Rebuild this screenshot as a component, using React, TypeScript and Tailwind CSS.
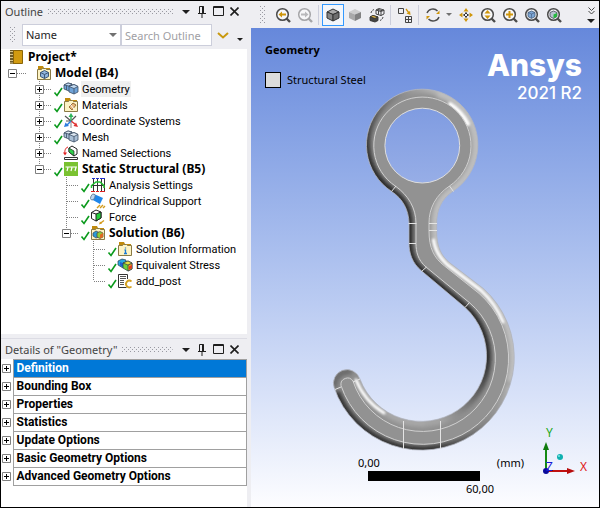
import React from "react";

const UI = "font-['Noto_Sans','Open_Sans',sans-serif]";

/* ---------- small glyphs ---------- */

function Dots({ id, className }: { id: string; className: string }) {
  return (
    <svg className={className} aria-hidden="true">
      <defs>
        <pattern id={id} width="4" height="4" patternUnits="userSpaceOnUse">
          <rect x="0" y="0" width="1" height="1" fill="#9a9aa2" />
          <rect x="2" y="2" width="1" height="1" fill="#9a9aa2" />
        </pattern>
      </defs>
      <rect width="100%" height="100%" fill={`url(#${id})`} />
    </svg>
  );
}

function Caret({ color = "#1e1e1e", size = 8 }: { color?: string; size?: number }) {
  return (
    <svg width={size} height={size / 2} viewBox="0 0 8 4" aria-hidden="true">
      <path d="M0 0h8L4 4z" fill={color} />
    </svg>
  );
}

function PanelHeader({ title, id }: { title: string; id: string }) {
  const button = "flex h-4 w-4 items-center justify-center";
  return (
    <header className="flex h-5 shrink-0 items-center bg-[#eeeef2] pt-px pr-[5px] pl-1">
      <h2 className="text-[11px] leading-5 whitespace-nowrap text-[#444]">{title}</h2>
      <Dots id={id} className="mx-[5px] h-[5px] min-w-0 flex-1" />
      <button className={button} aria-label={`${title} menu`}>
        <Caret />
      </button>
      <button className={button} aria-label={`Pin ${title}`}>
        <svg width="8" height="12" viewBox="0 0 8 12" stroke="#1e1e1e" fill="none">
          <path d="M1.500 7V.5h4V7M0 7.500h8M4 8v4" />
          <path d="M5 .5V7" strokeWidth="2" />
        </svg>
      </button>
      <button className={button} aria-label={`Maximize ${title}`}>
        <svg width="11" height="11" viewBox="0 0 11 11" stroke="#1e1e1e" fill="none">
          <path d="M.5.500h10v9H.5zM0 1.500h11" />
        </svg>
      </button>
      <button className={button} aria-label={`Close ${title}`}>
        <svg width="9" height="9" viewBox="0 0 9 9" stroke="#1e1e1e" strokeWidth="1.600" fill="none">
          <path d="M.5.500l8 8M8.500.500l-8 8" />
        </svg>
      </button>
    </header>
  );
}

/* ---------- tree icons ---------- */

function FolderBase({ children }: { children?: React.ReactNode }) {
  return (
    <>
      <path d="M2 1h5l1 2h6v4H2z" fill="#c08a0c" />
      <path d="M1.500 4.500h4l1-1h3l1 1h4V14.500h-13z" fill="#fdf3c4" stroke="#8a7a45" />
      {children}
    </>
  );
}

function BlocksIcon({ light }: { light?: boolean }) {
  const face = light ? "#a9bfd6" : "#6fa3d8";
  const top = light ? "#dbe6f0" : "#c5dcf3";
  return (
    <g stroke="#3d4f66" strokeWidth=".8" strokeLinejoin="round">
      <path d="M1 4l4-2 4 1v6l-3 1-5-2z" fill={face} />
      <path d="M1 4l4-2 4 1-3 2z" fill={top} />
      <path d="M6 5l5-1.500 4 2V11l-4 2-5-2z" fill={face} />
      <path d="M6 5.500l5-2 4 2-4 2z" fill={top} />
      <path d="M11 7.500V13M3.500 4.500V9" fill="none" />
    </g>
  );
}

const icons: Record<string, React.ReactNode> = {
  project: (
    <>
      <path d="M1 1h4v14H1z" fill="#6b5a2a" />
      <path d="M1 2.500h3M1 5.500h3M1 8.500h3M1 11.500h3M1 14h3" stroke="#d8c48c" />
      <path d="M4.500 1.500h9v13h-9z" fill="#d29b10" stroke="#8a6508" />
    </>
  ),
  model: (
    <FolderBase>
      <path d="M4.500 7.500l4-2 4 2v4l-4 2-4-2z" fill="#8fb4dd" stroke="#3f5877" />
      <path d="M4.500 7.500l4 2 4-2M8.500 9.500v4" stroke="#3f5877" fill="none" />
    </FolderBase>
  ),
  geometry: <BlocksIcon />,
  mesh: <BlocksIcon light />,
  materials: (
    <FolderBase>
      <path d="M6 10l4-4 3 2-4 5z" fill="#e6b77b" stroke="#9b6f3b" />
      <path d="M7 7l4 5" stroke="#fff" />
    </FolderBase>
  ),
  coords: (
    <g fill="none" strokeWidth="1.500">
      <path d="M8 8L2 3M8 8l5-5M8 8H3" stroke="#555" strokeWidth="1.200" />
      <path d="M8 8V3" stroke="#2fb45a" />
      <path d="M8 0l2.500 4h-5z" fill="#2fb45a" />
      <path d="M8 8l4 3" stroke="#e03030" />
      <path d="M15 14l-4.500-1 2.500-3.500z" fill="#e03030" />
      <path d="M8 8l-4 4" stroke="#2b7de0" />
      <path d="M1 14l1.500-4.500L6 13z" fill="#2b7de0" />
      <path d="M8 9v6" stroke="#888" strokeWidth="1" />
    </g>
  ),
  named: (
    <>
      <path d="M6 3l3-2 5 3v5l-3 2-5-4z" fill="#fff" stroke="#222" />
      <path d="M6 3l5 3v5l-5-4z" fill="#2fcf4a" stroke="#222" strokeWidth=".7" />
      <path d="M5 2C2 3 1.500 6 2 9" stroke="#e02020" fill="none" />
      <path d="M0 7.500h4L2 10.500z" fill="#e02020" />
      <path d="M1.500 12.500h13v2h-13z" fill="#fff" stroke="#333" />
    </>
  ),
  structural: (
    <>
      <path d="M1 1h14v14H1z" fill="#7ac231" />
      <path d="M2.500 6h11.500M5 6.500L4 10M9 6.500L8 10M13 6.500L12 10" stroke="#fff" strokeWidth="1.200" />
    </>
  ),
  analysis: (
    <>
      <path d="M3.500 2v12M7.500 2v12M11.500 2v12M14.500 2v12M2 8.500h13" stroke="#333" />
      <path d="M2 1.500h3M6 1.500h3M10 1.500h5" stroke="#2030d0" />
      <path d="M1 14.500h4M6 14.500h3M10 14.500h5" stroke="#e02020" />
      <path d="M1.500 11V8.500L6 5h4l4 3.500V11" stroke="#20c030" strokeWidth="1.500" fill="none" />
    </>
  ),
  cylinder: (
    <>
      <path d="M4 1l9 4-3 6-9-5z" fill="#1f86ea" />
      <ellipse cx="2.800" cy="4" rx="2" ry="3.200" transform="rotate(25 2.800 4)" fill="#bcd6f2" stroke="#607890" strokeWidth=".8" />
      <path d="M7 15l3-3M10 15l3-3M13 15l2-2" stroke="#d49a1a" strokeWidth="1.400" />
    </>
  ),
  force: (
    <>
      <path d="M1.500 3.500L6 1l5 2v6l-5 3-4.500-2.500z" fill="#fff" stroke="#222" />
      <path d="M6 5l5-2v6l-5 3z" fill="#25cf3c" stroke="#222" />
      <path d="M1.500 3.500L6 5" stroke="#222" />
      <path d="M10 14.500l4-3" stroke="#d49a1a" strokeWidth="1.300" />
      <path d="M9 15.500l1-3 2 2z" fill="#d49a1a" />
    </>
  ),
  solution: (
    <FolderBase>
      <path d="M3 8l3-2 3 1.500V12l-3 1-3-2z" fill="#2c9bd8" stroke="#345" strokeWidth=".7" />
      <path d="M7 8l3-1.500 3 1.500v4l-3 1.500L7 12z" fill="#8bcf3a" stroke="#543" strokeWidth=".7" />
      <path d="M10 9.500l3-1.500v4l-3 1.500z" fill="#e06a20" />
    </FolderBase>
  ),
  info: (
    <FolderBase>
      <path d="M8.500 6.500v1M8.500 8.500v4M7 12.500h3M7.500 9h1" stroke="#1a7ad4" strokeWidth="1.300" />
    </FolderBase>
  ),
  stress: (
    <g stroke="#2a3a4a" strokeWidth=".7" strokeLinejoin="round">
      <path d="M1 4l4-2 4 1v6l-3 2-5-3z" fill="#27a8e0" />
      <path d="M3 5l3 1v4L3 8.500z" fill="#1f60d0" stroke="none" />
      <path d="M6 6l5-2 4 2v6l-4 2-5-3z" fill="#6fd03a" />
      <path d="M11 8l4-2v6l-4 2z" fill="#f0a020" />
      <path d="M6 6l5-2 4 2-4 2z" fill="#e8e040" />
      <path d="M12 9.500l3-1.500v3l-3 1.500z" fill="#e03a20" stroke="none" />
    </g>
  ),
  script: (
    <>
      <path d="M9.500 14.500h-8v-13h9V6" stroke="#333" fill="none" />
      <path d="M3 3.500h6M3 5.500h6M3 7.500h4M3 9.500h4M3 11.500h4" stroke="#555" />
      <path d="M14.500 8.500A3.200 3.500 0 1 0 14.500 13.500" stroke="#d4a020" strokeWidth="1.800" fill="none" />
    </>
  ),
};

/* ---------- outline tree ---------- */

type Node = {
  label: string;
  icon: string;
  level: number;
  bold?: boolean;
  check?: boolean;
  box?: "+" | "-";
  last?: boolean;
  selected?: boolean;
};

const nodes: Node[] = [
  { label: "Project*", icon: "project", level: 0, bold: true },
  { label: "Model (B4)", icon: "model", level: 1, bold: true, box: "-", last: true },
  { label: "Geometry", icon: "geometry", level: 2, check: true, box: "+", selected: true },
  { label: "Materials", icon: "materials", level: 2, check: true, box: "+" },
  { label: "Coordinate Systems", icon: "coords", level: 2, check: true, box: "+" },
  { label: "Mesh", icon: "mesh", level: 2, check: true, box: "+" },
  { label: "Named Selections", icon: "named", level: 2, box: "+" },
  { label: "Static Structural (B5)", icon: "structural", level: 2, bold: true, check: true, box: "-", last: true },
  { label: "Analysis Settings", icon: "analysis", level: 3, check: true },
  { label: "Cylindrical Support", icon: "cylinder", level: 3, check: true },
  { label: "Force", icon: "force", level: 3, check: true },
  { label: "Solution (B6)", icon: "solution", level: 3, bold: true, check: true, box: "-", last: true },
  { label: "Solution Information", icon: "info", level: 4, check: true },
  { label: "Equivalent Stress", icon: "stress", level: 4, check: true },
  { label: "add_post", icon: "script", level: 4, check: true, last: true },
];

function Guide({ node }: { node: Node }) {
  return (
    <svg width="27" height="16" className="shrink-0" stroke="#808080" fill="none" aria-hidden="true">
      {node.level > 1 && <path d={node.last ? "M11.500 0v8" : "M11.500 0v16"} strokeDasharray="1 1" />}
      <path d={node.level > 1 ? "M12 8.500h12" : "M12 8.500h14"} strokeDasharray="1 1" />
      {node.box && (
        <>
          <path d="M7.500 4.500h8v8h-8z" fill="#fff" />
          <path d={node.box === "+" ? "M9 8.500h5M11.500 6v5" : "M9 8.500h5"} stroke="#000" />
        </>
      )}
    </svg>
  );
}

function TreeRow({ node }: { node: Node }) {
  return (
    <li
      role="treeitem"
      aria-level={node.level + 1}
      aria-selected={!!node.selected}
      aria-expanded={node.box ? node.box === "-" : undefined}
      className="flex h-4 items-center"
    >
      {Array.from({ length: Math.max(0, node.level - 1) }, (_, i) => (
        <span key={i} className="w-[27px] shrink-0" />
      ))}
      {node.level > 0 && <Guide node={node} />}
      {node.level > 0 && (
        <svg width="8" height="16" className="shrink-0 overflow-visible" aria-hidden="true">
          {node.check && <path d="M-.5 11.500l2.500 3L7 7" stroke="#0b9a1c" strokeWidth="1.600" fill="none" />}
        </svg>
      )}
      <svg width="16" height="16" viewBox="0 0 16 16" className={node.level > 0 ? "shrink-0" : "ml-2 shrink-0"} aria-hidden="true">
        {icons[node.icon]}
      </svg>
      <span
        className={`ml-[2px] px-px whitespace-nowrap ${
          node.bold ? "text-[12px] leading-4 font-bold" : "pt-px font-['Roboto',sans-serif] text-[11px] leading-[15px]"
        } ${node.selected ? "bg-[#f0f0f0]" : ""}`}
      >
        {node.label}
      </span>
    </li>
  );
}

function OutlinePanel() {
  return (
    <section className="flex min-h-0 flex-1 flex-col">
      <PanelHeader title="Outline" id="dots-outline" />
      <div className="flex h-7 shrink-0 items-center bg-[#eeeef2] pl-[9px]">
        <Dots id="dots-search" className="h-4 w-[6px]" />
        <div className="relative ml-[6px] h-[22px] w-[99px]">
          <select
            aria-label="Filter by"
            className="block h-full w-full appearance-none border border-[#cccedb] bg-white pl-[3px] text-[11px] leading-4 text-[#1e1e1e]"
          >
            <option>Name</option>
          </select>
          <span className="pointer-events-none absolute top-[9px] right-1 flex">
            <Caret color="#717171" />
          </span>
        </div>
        <input
          aria-label="Search Outline"
          placeholder="Search Outline"
          className="h-[22px] w-[91px] border border-[#cccedb] bg-white pl-[3px] text-[11px] leading-4 placeholder:text-[#a0a0a4]"
        />
        <button aria-label="Search options" className="ml-[5px] flex">
          <svg width="12" height="7" viewBox="0 0 12 7" fill="none" stroke="#c9990f" strokeWidth="2">
            <path d="M1 1l5 4.500L11 1" />
          </svg>
        </button>
        <button aria-label="Toolbar options" className="mt-2 ml-2 flex">
          <Caret size={6} />
        </button>
      </div>
      <ul role="tree" aria-label="Outline" className="min-h-0 flex-1 overflow-hidden bg-white">
        {nodes.map((n) => (
          <TreeRow key={n.label} node={n} />
        ))}
      </ul>
    </section>
  );
}

/* ---------- details ---------- */

const details = [
  "Definition",
  "Bounding Box",
  "Properties",
  "Statistics",
  "Update Options",
  "Basic Geometry Options",
  "Advanced Geometry Options",
];

function DetailsPanel() {
  return (
    <section className="flex shrink-0 flex-col border-t border-[#dcdce4] bg-white pb-[21px]">
      <PanelHeader title={'Details of "Geometry"'} id="dots-details" />
      <table className="w-full border-collapse">
        <tbody>
          {details.map((d, i) => (
            <tr key={d} className="h-[18px]">
              <td className="w-3 p-0">
                <button aria-label={`Expand ${d}`} className="mx-px flex h-[9px] w-[9px]">
                  <svg width="9" height="9" fill="none">
                    <path d="M.5.500h8v8h-8z" stroke="#808080" />
                    <path d="M2 4.500h5M4.500 2v5" stroke="#000" />
                  </svg>
                </button>
              </td>
              <th
                scope="row"
                className={`border border-[#a0a0a0] py-0 pr-0 pl-[3px] text-left font-['Roboto',sans-serif] text-[12px] leading-[17px] font-bold ${
                  i === 0 ? "bg-[#0078d7] text-white" : "text-black"
                }`}
              >
                {d}
              </th>
            </tr>
          ))}
        </tbody>
      </table>
    </section>
  );
}

/* ---------- toolbar ---------- */

function Lens({ color = "#4a4a4a", children }: { color?: string; children?: React.ReactNode }) {
  return (
    <svg width="16" height="16" viewBox="0 0 16 16" fill="none">
      <circle cx="7.500" cy="7.500" r="5.800" stroke={color} strokeWidth="1.500" fill="#f7f7f9" />
      <path d="M11.500 11.500l3.500 3.500" stroke={color} strokeWidth="2.400" />
      {children}
    </svg>
  );
}

function Cube({ top, left, right, line }: { top: string; left: string; right: string; line: string }) {
  return (
    <svg width="14" height="14" viewBox="0 0 14 14" stroke={line} strokeLinejoin="round">
      <path d="M1 4l6-3 6 3-6 2.500z" fill={top} />
      <path d="M1 4l6 2.500V13l-6-3z" fill={left} />
      <path d="M13 4L7 6.500V13l6-3z" fill={right} />
    </svg>
  );
}

function Tool({ label, active, children }: { label: string; active?: boolean; children: React.ReactNode }) {
  return (
    <button
      aria-label={label}
      aria-pressed={active}
      className={`flex h-[22px] w-[22px] shrink-0 items-center justify-center ${active ? "border border-[#3399ff] bg-[#f3f6fb]" : ""}`}
    >
      {children}
    </button>
  );
}

function Sep() {
  return <span className="mr-[3px] ml-[2px] h-5 w-px shrink-0 bg-[#cccedb]" />;
}

function Toolbar() {
  return (
    <div role="toolbar" aria-label="Graphics" className="flex h-[27px] shrink-0 items-center bg-[#eeeef2] pl-[9px]">
      <Dots id="dots-tool" className="mr-[6px] h-[17px] w-[6px] shrink-0" />
      <Tool label="Previous view">
        <Lens>
          <path d="M3.500 7.500L7 4.500v2h4v2H7v2z" fill="#cf960b" />
        </Lens>
      </Tool>
      <Tool label="Next view">
        <Lens color="#a5a5a8">
          <path d="M11.500 7.500L8 4.500v2H4v2h4v2z" fill="#b9b9bc" />
        </Lens>
      </Tool>
      <Sep />
      <Tool label="Shaded with edges" active>
        <Cube top="#a8a8a8" left="#858585" right="#6d6d6d" line="#333" />
      </Tool>
      <Tool label="Shaded">
        <Cube top="#cdcdcd" left="#a9a9a9" right="#828282" line="none" />
      </Tool>
      <Tool label="Wireframe">
        <svg width="16" height="16" viewBox="0 0 16 16" fill="none" stroke="#333" strokeWidth=".9">
          <path d="M7 3l3-1.500L15 3v4l-3 1.500L7 7zM7 3l5 1.500V8.500M12 4.500L15 3M9.500 3.700V7.500M8.500 2.300l5 1.500" />
          <path d="M1 10l3-1.500 5 1.500v3.500L6 15l-5-1.500z" fill="#444" />
          <path d="M1 10l3-1.500 5 1.500-3 1.300z" fill="#f0c24a" />
          <path d="M2 6c.5-2 1.500-3 3-3.500M14 10c-.5 2-1.500 3-3 3.500" strokeDasharray="2 1" />
        </svg>
      </Tool>
      <Sep />
      <Tool label="Arrange views">
        <svg width="16" height="16" viewBox="0 0 16 16" fill="none" stroke="#444">
          <path d="M1.500 1.500h5v5h-5z" />
          <path d="M8.500 9.500h6v6h-6zM11.500 9.500v6M8.500 12.500h6" />
          <path d="M9 2l3 4" stroke="#cf960b" strokeWidth="1.300" />
          <path d="M13.500 8l-4-1.500L13 4z" fill="#cf960b" stroke="none" />
        </svg>
      </Tool>
      <Sep />
      <Tool label="Rotate">
        <svg width="16" height="16" viewBox="0 0 16 16" fill="none" stroke="#4a4a4a" strokeWidth="1.400">
          <path d="M2 6A6.200 6 0 0 1 12.500 4M14 10A6.200 6 0 0 1 3.500 12" />
          <path d="M14.500 3.500v3.500h-3.500zM1.500 12.500V9H5z" fill="#cf960b" stroke="none" />
        </svg>
      </Tool>
      <button aria-label="Rotate options" className="mr-px flex w-[10px] shrink-0 justify-center">
        <Caret size={6} color="#717171" />
      </button>
      <Tool label="Pan">
        <svg width="14" height="14" viewBox="0 0 14 14" fill="#cf960b">
          <path d="M7 0l2.500 3.500h-5zM7 14l2.500-3.500h-5zM0 7l3.500-2.500v5zM14 7l-3.500-2.500v5z" />
          <path d="M6 4.500h2v1.500H6zM6 8h2v1.500H6zM4.500 6H6v2H4.500zM8 6h1.500v2H8z" fill="#333" />
          <path d="M6 6h2v2H6z" fill="#f4f4f6" />
        </svg>
      </Tool>
      <Tool label="Zoom">
        <Lens>
          <path d="M7.500 3l3 3.500h-6zM7.500 12l3-3.500h-6z" fill="#cf960b" />
        </Lens>
      </Tool>
      <Tool label="Box zoom">
        <Lens>
          <path d="M7.500 4v7M4 7.500h7" stroke="#cf960b" strokeWidth="2" />
        </Lens>
      </Tool>
      <Tool label="Zoom to fit">
        <Lens>
          <path d="M4 5.500l3.500-1.500L11 5.500v4l-3.500 2-3.500-2z" fill="#7da7d6" stroke="#3f5877" strokeWidth=".8" />
          <path d="M4 5.500l3.500 1.500L11 5.500M7.500 7v4" stroke="#3f5877" strokeWidth=".6" />
        </Lens>
      </Tool>
      <Tool label="Zoom to selection">
        <Lens>
          <path d="M4 5.500l3.500-1.500L11 5.500v4l-3.500 2-3.500-2z" fill="#b8c4d0" stroke="#445" strokeWidth=".8" />
          <path d="M7.500 7.500L11 6v3.500l-3.500 2z" fill="#25b83c" />
        </Lens>
      </Tool>
      <button aria-label="More tools" className="mr-1 ml-auto flex w-2 shrink-0 flex-col items-center gap-1">
        <svg width="7" height="8" viewBox="0 0 7 8" fill="none" stroke="#444">
          <path d="M.5.500l3 3 3-3M.5 4l3 3 3-3" />
        </svg>
        <Caret size={8} />
      </button>
    </div>
  );
}

/* ---------- hook model ---------- */

const BODY =
  "M391.700 191.500A55.700 55.700 0 1 1 452.600 191.500C441.500 199 436.700 210 436.700 223V231C436.700 246 441 256 450 263L483.300 288.400A92.600 92.600 0 1 1 334.100 387.600A13.600 13.600 0 0 1 359.900 378.800A65.400 65.400 0 1 0 465.200 307.600L421.700 271C412 263 409 253 409 243V223C408.700 210 403 199 391.700 191.500Z";
const FACE =
  "M395.700 186.300A48.600 48.600 0 1 1 449.500 186C436 195 429 208 429 223V231C429 248 434 258 444.500 266L479 293.400A86 86 0 1 1 341 385.500A6.500 6.500 0 0 1 353 381.200A73 73 0 1 0 469.500 302.700L426 267C418 260 416 252 416 243V223C416 208 408 195 395.700 186.300Z";

function Hook() {
  return (
    <svg
      viewBox="251 28 348 479"
      className="absolute inset-0 h-full w-full"
      fill="none"
      role="img"
      aria-label="Hook model"
    >
      <defs>
        <clipPath id="body">
          <path d={`${BODY}M459.700 145.500A37.400 37.400 0 1 0 384.900 145.500A37.400 37.400 0 1 0 459.700 145.500Z`} clipRule="evenodd" />
        </clipPath>
        <filter id="soft" x="-20%" y="-20%" width="140%" height="140%">
          <feGaussianBlur stdDeviation="2" />
        </filter>
        <filter id="glow" x="-20%" y="-20%" width="140%" height="140%">
          <feGaussianBlur stdDeviation=".9" />
        </filter>
        <linearGradient id="ringShade" gradientUnits="userSpaceOnUse" x1="368" y1="160" x2="440" y2="96">
          <stop offset="0" stopColor="#2c2c2c" />
          <stop offset=".55" stopColor="#767676" />
          <stop offset="1" stopColor="#b4b4b4" />
        </linearGradient>
        <linearGradient id="bowShade" gradientUnits="userSpaceOnUse" x1="430" y1="450" x2="510" y2="380">
          <stop offset="0" stopColor="#303030" />
          <stop offset=".5" stopColor="#808080" />
          <stop offset="1" stopColor="#b8b8b8" />
        </linearGradient>
        <linearGradient id="innerShade" gradientUnits="userSpaceOnUse" x1="487" y1="360" x2="440" y2="420">
          <stop offset="0" stopColor="#2c2c2c" />
          <stop offset="1" stopColor="#a4a4a4" />
        </linearGradient>
      </defs>
      <g clipPath="url(#body)">
        <path d={BODY} fill="#909090" />
        <g filter="url(#soft)">
          <path d="M391.700 191.500A55.700 55.700 0 0 1 440 92" stroke="url(#ringShade)" strokeWidth="9" />
          <path d="M391.700 191.500C403 199 408.700 210 409 223V243C409 253 412 263 421.700 271L465.200 307.600A65.400 65.400 0 0 1 487 357" stroke="#2c2c2c" strokeWidth="8" />
          <path d="M487 355A65.400 65.400 0 0 1 421.700 422.900" stroke="url(#innerShade)" strokeWidth="8" />
          <path d="M336 392A92.600 92.600 0 0 0 432 449.500" stroke="#303030" strokeWidth="8" />
          <path d="M430 449.700A92.600 92.600 0 0 0 510 385" stroke="url(#bowShade)" strokeWidth="9" />
          <path d="M335 388A13.600 13.600 0 0 1 352 372" stroke="#686868" strokeWidth="6" />
          <path d="M438 92A55.700 55.700 0 0 1 452.600 191.500C441.500 199 436.700 210 436.700 223V231C436.700 246 441 256 450 263L483.300 288.400A92.600 92.600 0 0 1 511 383" stroke="#bebebe" strokeWidth="11" />
          <path d="M359.900 378.800A65.400 65.400 0 0 0 425 423" stroke="#a8a8a8" strokeWidth="8" />
        </g>
        <g filter="url(#glow)" stroke="#fff" strokeLinecap="round">
          <path d="M450 104A50.500 50.500 0 0 1 468 124" strokeWidth="4" />
          <path d="M433.500 240C435 251 440 258 447 264.500L481 290.500A89 89 0 0 1 503 322" strokeWidth="3" />
          <path d="M356 380A69 69 0 0 0 384 413" strokeWidth="3" />
        </g>
      </g>
      <path d={FACE} fill="#929292" stroke="#d0d0d0" />
      <path d={BODY} stroke="#b4b8c2" strokeWidth=".8" />
      <path
        d="M391.500 191.500l4.500-5.500M449.500 186l4 5.500M408.500 223.500h8M429 223.500h8M409 243.500h7M429 230.500h8M421.500 271.500l5-4.500M465 307.500l4.500-5M335 389.500l6-2.500M353 382l7-3M403.500 421v28M440.500 421v28"
        stroke="#e4e4e4"
      />
      <circle cx="422.300" cy="145.600" r="37.400" fill="url(#hole)" stroke="#dedede" />
      <linearGradient id="hole" gradientUnits="userSpaceOnUse" x1="0" y1="28" x2="0" y2="507">
        <stop offset="0" stopColor="#6688db" />
        <stop offset="1" stopColor="#fdfdff" />
      </linearGradient>
    </svg>
  );
}

function Triad() {
  return (
    <svg width="60" height="54" viewBox="0 0 60 54" className="absolute right-2 bottom-[22px] overflow-visible" fontSize="12" aria-label="Axis triad">
      <path d="M15 40V19" stroke="#138a13" strokeWidth="2" />
      <path d="M15 11l3 8h-6z" fill="#0d7a0d" />
      <path d="M15 40h23" stroke="#c01010" strokeWidth="2" />
      <path d="M44 40l-8-3v6z" fill="#b80c0c" />
      <circle cx="15" cy="40" r="3" fill="#0a0a9a" />
      <circle cx="29" cy="26" r="3" fill="#0fb0b0" />
      <circle cx="28" cy="25" r="1" fill="#7fe6e6" />
      <text x="15" y="6" fill="#18a818">Y</text>
      <text x="49" y="40" fill="#e01818">X</text>
      <text x="15" y="40" fill="#1818d8">Z</text>
    </svg>
  );
}

function Viewport() {
  return (
    <main className="relative min-h-0 flex-1 overflow-hidden bg-linear-to-b from-[#6688db] to-[#fdfdff]">
      <Hook />
      <div className="absolute top-[14px] left-[14px] text-[11px] leading-4 text-black">
        <h1 className="font-bold">Geometry</h1>
        <p className="mt-[14px] flex items-center gap-[6px]">
          <span className="h-4 w-4 border border-black bg-[#dcdcdc]" />
          Structural Steel
        </p>
      </div>
      <div className="absolute top-[19px] right-[17px] text-right font-['Inter',sans-serif] text-white">
        <p className="text-[30px] leading-9 font-extrabold">Ansys</p>
        <p className="text-[17px] leading-5 font-medium">2021 R2</p>
      </div>
      <div className="absolute bottom-[10px] left-1/2 -ml-[67px] flex w-[166px] flex-col text-[11px] leading-4 text-black">
        <div className="flex w-full justify-between">
          <span>0,00</span>
          <span>(mm)</span>
        </div>
        <span className="ml-[10px] h-[10px] w-28 bg-black" />
        <span className="ml-[108px]">60,00</span>
      </div>
      <Triad />
    </main>
  );
}

export default function App() {
  return (
    <div className={`flex h-screen overflow-hidden border border-black bg-[#eeeef2] ${UI}`}>
      <aside className="mr-1 flex w-[246px] shrink-0 flex-col gap-1">
        <OutlinePanel />
        <DetailsPanel />
      </aside>
      <div className="flex min-w-0 flex-1 flex-col">
        <Toolbar />
        <Viewport />
      </div>
    </div>
  );
}
